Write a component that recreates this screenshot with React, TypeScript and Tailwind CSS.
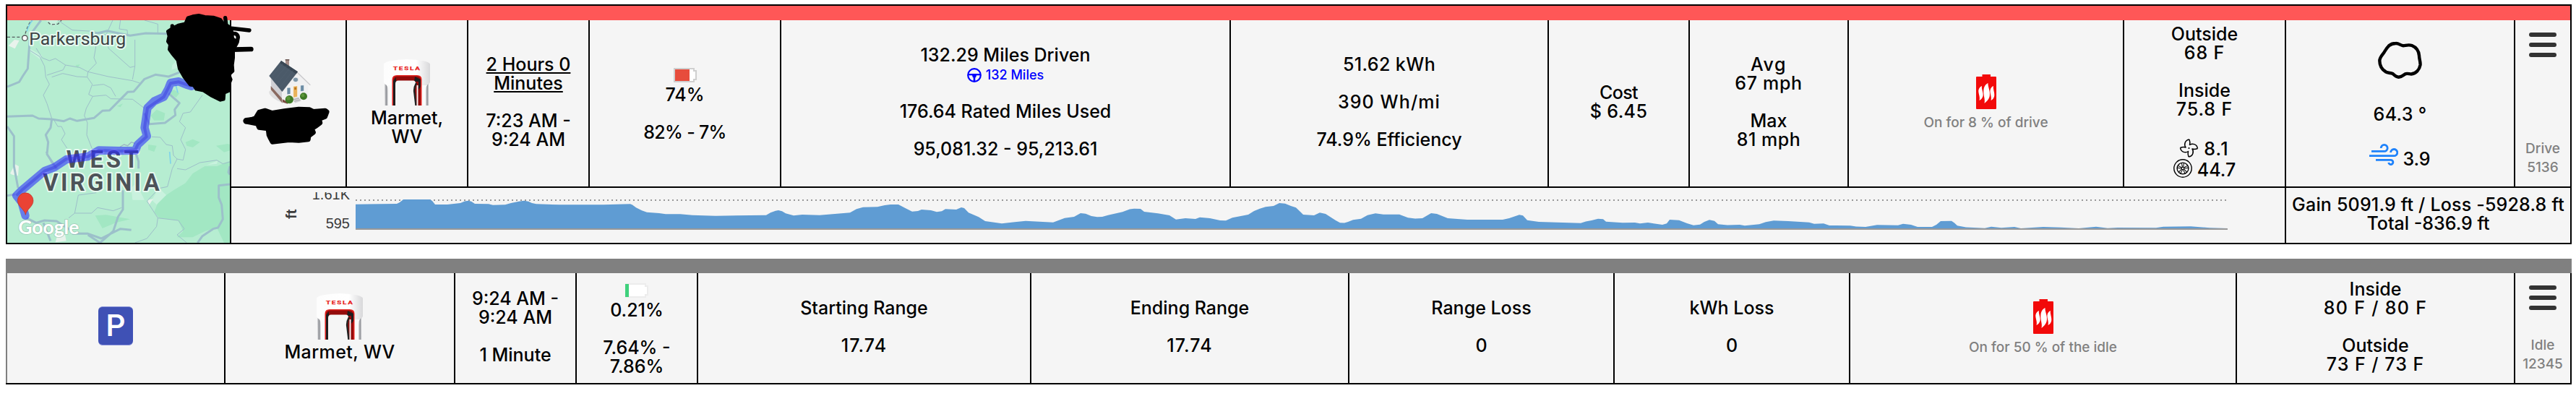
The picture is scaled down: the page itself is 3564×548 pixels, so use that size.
import type { ReactNode } from "react";

// [x, y] samples of the elevation curve
const elevation = [
  [492, 282.7], [549, 282], [553, 280], [558, 276], [595, 276], [598, 278], [602, 283], [619, 283], [637, 281], [643, 278.5], [648, 277.7], [652, 278.8],
  [657, 282], [676, 282.3], [682, 283.7], [699, 283.3], [707, 281], [718, 278.8], [725, 277.7], [731, 278.8], [736, 281], [742, 282.3],
  [774, 283.3], [835, 283.3], [872, 282.3], [875, 283.6], [880, 287.3], [888, 291.2], [895, 293.7], [912, 295], [921, 296.3], [941, 296.3], [958, 297.7],
  [990, 298.7], [1060, 297.7], [1066, 294.3], [1073, 291.7], [1077, 291], [1082, 292.3], [1087, 295.3], [1098, 298.3],
  [1110, 297], [1134, 297.7], [1176, 294.3], [1185, 289.3], [1194, 286.7], [1214, 286.3], [1224, 284], [1232, 283], [1243, 283], [1252, 287.7],
  [1262, 292.7], [1270, 292], [1275, 290], [1288, 291], [1296, 293.3], [1303, 292.3], [1308, 289.3], [1323, 290], [1330, 287],
  [1334, 288], [1340, 294.3], [1354, 300.3], [1363, 306], [1386, 309.3], [1404, 307.3], [1419, 305.7], [1457, 307.7], [1473, 301.7],
  [1486, 300], [1495, 295], [1502, 295.7], [1510, 299], [1518, 300.3], [1525, 300], [1533, 297.7], [1553, 293.3], [1563, 289.4], [1569, 288.7],
  [1578, 289], [1583, 293], [1602, 295.3], [1618, 298], [1627, 303.7], [1640, 302], [1654, 303], [1660, 300.7], [1674, 302], [1688, 305], [1696, 305.3],
  [1705, 301.3], [1727, 297], [1735, 292], [1743, 288.7], [1751, 286.3], [1762, 285], [1770, 281], [1778, 281.7], [1786, 285], [1793, 287.3], [1799, 293], [1803, 297],
  [1818, 298], [1826, 294.3], [1834, 296], [1848, 305], [1854, 308.2], [1860, 308.5], [1865, 307], [1872, 304.3], [1883, 302.7], [1892, 297.7], [1903, 295.3],
  [1914, 296.7], [1936, 296.7], [1948, 301.3], [1958, 302.5], [1968, 302], [1980, 295], [1988, 296], [2003, 302], [2030, 304], [2079, 304],
  [2088, 302], [2102, 297.3], [2107, 298.3], [2113, 304.7], [2129, 307], [2187, 308.7], [2194, 306.5], [2202, 305], [2211, 302.7], [2218, 303.3],
  [2222, 306.7], [2245, 308.3], [2262, 308], [2269, 309.3], [2280, 308], [2300, 311], [2306, 309.3], [2310, 304], [2323, 304.7],
  [2334, 309], [2343, 311.7], [2352, 310.7], [2358, 307], [2365, 304.3], [2372, 305.7], [2377, 310.3], [2390, 311.4], [2407, 311], [2414, 312.3],
  [2434, 310.3], [2443, 307.3], [2454, 305.3], [2474, 306], [2503, 307.7], [2510, 309.7], [2523, 309.3], [2531, 312], [2560, 312.3], [2568, 313.5], [2581, 314], [2597, 311.3],
  [2626, 311.7], [2633, 309.7], [2644, 311], [2653, 314], [2673, 314], [2679, 311], [2685, 306], [2700, 305.7], [2704, 308.5], [2708, 312.3], [2720, 314.4],
  [2746, 315.7], [2755, 313.7], [2769, 315.3], [2787, 314], [2796, 316], [2827, 314], [2851, 314.7], [2876, 316], [2900, 313.7],
  [2916, 315.7], [2930, 315], [2983, 315.3], [2993, 313.7], [3031, 313.3], [3057, 315.3], [3082, 316],
];

function Cell({ className, children }: { className: string; children?: ReactNode }) {
  return (
    <div className={"flex shrink-0 flex-col items-center border-r-2 border-black text-center " + className}>
      {children}
    </div>
  );
}

// Stacked lines of text, an empty string leaves a blank line
function Lines({ items }: { items: string[] }) {
  return (
    <>
      {items.map((item, i) => (
        <p key={i} className="h-[26px] whitespace-nowrap">
          {item}
        </p>
      ))}
    </>
  );
}

function IconCharger() {
  return (
    <svg className="mt-0.5 mb-1 h-16 w-16 shrink-0" viewBox="0 0 64 64">
      <defs>
        <linearGradient id="shell" x1="0" x2="1" y1="0" y2="0">
          <stop offset="0" stopColor="#fdfdfd" />
          <stop offset="0.7" stopColor="#ffffff" />
          <stop offset="1" stopColor="#d8d8da" />
        </linearGradient>
        <linearGradient id="leg" x1="0" x2="1" y1="0" y2="0">
          <stop offset="0" stopColor="#dcdcde" />
          <stop offset="0.5" stopColor="#8f9196" />
          <stop offset="1" stopColor="#e6e6e8" />
        </linearGradient>
      </defs>
      <path d="M0 7 Q0 4.5 8 2.5 Q32 -2.5 56 2.5 Q64 4.5 64 7 V32 Q62 34 60 40 H4 Q2 34 0 32Z" fill="url(#shell)" />
      <path d="M4 36 H12 V64 H6 Q5 50 4 36Z M52 36 H60 V64 H52Z" fill="#fafafa" />
      <path d="M1 34 Q6 36 6 44 V64 H1.5Z" fill="url(#leg)" />
      <path d="M62 34 Q58 36 58 44 V64 H62.5Z" fill="url(#leg)" />
      <path d="M11.5 64 V28 Q11.5 22 18 22 H46 Q52.5 22 52.5 28 V64Z" fill="#e2231f" />
      <path d="M13 64 V29 Q13 23.5 18.5 23.5 H45.5 Q51 23.5 51 29 V64Z" fill="#930b0b" />
      <path d="M13 64 V30 L17 25 V34 L16 64Z M43 24 L51 28 V38 L48 42 L48 31 H42Z" fill="#1d1d1f" />
      <path d="M16 64 V34 Q16 29.5 20 29.5 H41 Q45 30 44 36 L42 46 L44 64Z" fill="#f5f5f5" />
      <path d="M45 33 Q41 40 42.5 47 L44.5 64" fill="none" stroke="#222" strokeWidth="2.4" />
      <path d="M46.5 36 V64" stroke="#f5f5f5" strokeWidth="2" />
      <text
        x="13"
        y="15.2"
        textLength="38.5"
        lengthAdjust="spacingAndGlyphs"
        className="fill-[#e8211d] stroke-[#e8211d] font-['Roboto'] text-[6.8px] font-bold tracking-[1.2px]"
        strokeWidth="0.25"
      >
        TESLA
      </text>
    </svg>
  );
}

function IconHouse() {
  return (
    <svg className="mt-0.5 mb-1 h-16 w-16 shrink-0" viewBox="1101 246 192 192">
      <ellipse cx="1160" cy="402" rx="48" ry="18" fill="#dededf" transform="rotate(28 1160 402)" />
      <path d="M1185 247h15v26h-15z" fill="#a98f8a" />
      <path d="M1184 246h17v5h-17z" fill="#6f5c58" />
      <path d="M1124 318 L1172 376 V420 L1126 368Z" fill="#d0d0d4" />
      <path d="M1124 357 L1172 410 V428 L1124 372Z" fill="#8a6a60" />
      <path d="M1170 378 L1232 298 L1279 346 V406 L1200 430 L1170 424Z" fill="#f0f0f1" />
      <path d="M1172 378 L1233 300 L1288 353" fill="none" stroke="#c9c9cc" strokeWidth="4" />
      <path d="M1167 252 L1236 298 L1171 381 L1117 315Z" fill="#4b5a69" />
      <path d="M1167 252 L1236 298 L1229 307 L1162 262Z" fill="#3a4754" />
      <path d="M1128 318 L1175 264 M1140 331 L1189 274 M1152 346 L1203 283 M1163 361 L1217 292" stroke="#526170" strokeWidth="2" />
      <ellipse cx="1227" cy="331" rx="11" ry="10" fill="#7f97a8" stroke="#fff" strokeWidth="2" />
      <path d="M1191 364 l15 -1 v28 l-15 2z M1247 354 l15 -1 v25 l-15 2z" fill="#6b8ba3" stroke="#fff" strokeWidth="2" />
      <path d="M1217 358 l18 -2 v46 l-18 4z" fill="#e9b25a" stroke="#fff" strokeWidth="2" />
      <path d="M1222 363 l8 -1 v10 l-8 1z" fill="#b9741f" />
      <path d="M1216 408 l22 -5 l12 16 l-26 9z" fill="#d5d5d8" />
      <path d="M1218 414 l24 -6 M1221 421 l26 -7" stroke="#98989c" strokeWidth="2" />
      <path d="M1172 412 v12 l22 7 v-8z" fill="#7a4a40" />
      <circle cx="1201" cy="413" r="17" fill="#3f7a27" />
      <circle cx="1197" cy="408" r="8" fill="#5c9639" />
      <circle cx="1260" cy="400" r="15" fill="#3f7a27" />
      <circle cx="1257" cy="396" r="7" fill="#5c9639" />
    </svg>
  );
}

function IconHeater() {
  return (
    <svg className="mb-1.5 h-12 w-7 shrink-0" viewBox="0 0 28 48">
      <path d="M8.5 0h11.5v3H27a1 1 0 0 1 1 1v43a1 1 0 0 1-1 1H1a1 1 0 0 1-1-1V4a1 1 0 0 1 1-1h7.5z" fill="#f20a0a" />
      <g fill="#fff">
        <path d="M16.5 12C16 17 20.5 24 18.5 31C17.5 35 14 38 11.5 40C13 34 9.5 28 10.5 21C11 16 14 13 16.5 12Z" />
        <path d="M8 16C7 20 10.5 25 9.5 30C8.5 33 7 35 4.5 36C6 31 3 27 3.3 22C4 18.5 6 17 8 16Z" />
        <path d="M24 16C23 20 26 25 25.2 30C24.5 33 23 35 20.5 36C22 31 19 27 19.5 22C20 18.5 22 17 24 16Z" />
      </g>
    </svg>
  );
}

function IconBattery({ charging }: { charging?: boolean }) {
  return (
    <svg className="mt-2 mb-1 h-5 w-8 shrink-0" viewBox="0 0 32 20">
      <path
        d="M1 1H28V4H31V16H28V19H1Z"
        fill="#fff"
        stroke={charging ? "#ececec" : "#cfcfcf"}
        strokeWidth="2"
      />
      {charging ? <path d="M0 1H5V19H0Z" fill="#3fd17c" /> : <path d="M2 2H22V18H2Z" fill="#e74c3c" />}
    </svg>
  );
}

function IconWheel() {
  return (
    <svg className="h-5 w-5" viewBox="0 0 20 20" fill="none" stroke="#00f" strokeWidth="2.2">
      <circle cx="10" cy="10" r="8.8" />
      <path d="M1.5 9.2H18.5" />
      <path d="M10 12V18" strokeWidth="2.6" />
      <path d="M6.5 8.5H13.5L12.3 12.5L10 14.5L7.700 12.5Z" fill="#00f" stroke="none" />
    </svg>
  );
}

function IconFan() {
  const blade = "M13 1Q14.5 5 13.5 8.5C17 6 23.5 7 24.5 13.5";
  return (
    <svg className="h-[26px] w-[25px] overflow-visible" viewBox="0 0 25 26" fill="none" stroke="#000" strokeWidth="1.5" strokeLinejoin="round">
      <path d={blade} />
      <path d={blade} transform="rotate(90 12.5 13)" />
      <path d={blade} transform="rotate(180 12.5 13)" />
      <path d={blade} transform="rotate(270 12.5 13)" />
      <circle cx="12.5" cy="13" r="1.1" fill="#000" stroke="none" />
    </svg>
  );
}

function IconTire() {
  return (
    <svg className="h-[26px] w-[26px]" viewBox="0 0 26 26" fill="none" stroke="#000" strokeWidth="1.4">
      <circle cx="13" cy="13" r="12.2" />
      <circle cx="13" cy="13" r="7.9" />
      <circle cx="13" cy="13" r="1.7" strokeWidth="1" />
      {[0, 72, 144, 216, 288].map((deg) => (
        <path key={deg} d="M11.4 5.3L12.4 11.4M14.6 5.3L13.6 11.4" strokeWidth="1" transform={`rotate(${deg} 13 13)`} />
      ))}
    </svg>
  );
}

function IconWind() {
  return (
    <svg className="h-[30px] w-10" viewBox="0 0 40 30" fill="none" stroke="#1e82fb" strokeWidth="2.8">
      <path d="M3 10.4H20.5A4.5 4.5 0 1 0 16.2 6" />
      <path d="M0 16.7H34A4.6 4.6 0 1 0 29.6 12" />
      <path d="M9 22.4H29.5A3.1 3.1 0 1 1 26.7 26" />
    </svg>
  );
}

function IconCloud() {
  return (
    <svg className="mt-[29px] h-[52px] w-[61px] shrink-0" viewBox="0 0 61 52" fill="none" stroke="#000" strokeWidth="4.4">
      <path d="M24.7 3C29 2.8 31 5.8 35 6.2C38 6.2 42 4.2 47 6C53 8.5 56.5 14 57 20C57 25 59 28 58.5 33C57.5 39 53 45 46 45.5C43 45.5 40 44 37.5 45.5C34 48 33 49.5 28.7 49.7C24 49.5 23 47 20.5 45C17 43.5 15 44.5 11 42.5C5 39 2.3 33 2.3 27C2.5 22 6 19 8.5 15.5C10.5 12 12 9 15.5 6C18 4 21 3 24.7 3Z" />
    </svg>
  );
}

function MenuCell({ lines }: { lines: string[] }) {
  return (
    <div className="flex w-[76px] shrink-0 flex-col items-center justify-between pt-[17px] pb-[13px] text-center text-[19px] text-[#808080]">
      <div className="flex w-[38px] flex-col gap-2">
        <span className="h-1.5 rounded-full bg-[#333]" />
        <span className="h-1.5 rounded-full bg-[#333]" />
        <span className="h-1.5 rounded-full bg-[#333]" />
      </div>
      <div>
        <Lines items={lines} />
      </div>
    </div>
  );
}

function RouteMap() {
  return (
    <svg className="h-[308px] w-[308px]" viewBox="30 84 924 924">
      <path d="M30 84H954V1008H30Z" fill="#b6edd1" />
      <g fill="#a2e7c3">
        <path d="M954 668L900 690L850 690L800 720L770 760L720 790L660 830L640 880L660 905L740 915L760 960L735 985L800 985L850 960L900 945L930 1008H954Z" />
        <path d="M625 480L650 455L685 470L680 500L640 500Z M770 590L800 578L830 590L800 612L775 605Z M897 605L945 597L954 600V625L930 632Z M615 600L650 605L640 630L615 622Z M395 895L440 892L540 910L480 925L425 948Z M313 270L332 268L322 282Z M485 440L510 430L500 445Z M700 385L722 372L745 388L730 405Z" />
      </g>
      <g fill="#c9f2de">
        <path d="M715 270L735 250L735 282L712 290Z M860 685L905 665L900 680Z M545 780L565 760L600 830L550 830Z M120 200L175 230L165 245L125 215Z M630 830L660 780L690 810L650 850Z M190 84L240 84L225 110Z" />
      </g>
      <path d="M35 190L60 165L80 168L62 202Z M42 720L62 682L78 690L75 730L50 725Z M612 830L636 826L618 852Z M240 970L270 975L275 1000L230 1006Z" fill="#e8f3ec" />
      <g fill="none" stroke="#9dbfc9" strokeWidth="3" strokeLinejoin="round">
        <path d="M125 210L165 235L185 275L190 320L205 350L180 395L195 430L215 492" />
        <path d="M150 200L175 240L205 252L230 243L272 270L262 290L195 312M272 270L330 280L365 298L362 320L383 350L368 392L385 400L358 450L350 480L363 510L360 560L385 625" />
        <path d="M240 84L300 125L385 130L398 195L390 240L400 262L365 298L450 318L550 335L580 345" />
        <path d="M385 130L440 145L468 84M440 145L450 200L540 280L560 275L550 330M560 275L560 165M500 84L495 120L528 125L530 150" />
        <path d="M600 84L655 100L655 138M215 320L260 305L320 318L362 320" />
        <path d="M385 400L440 395L460 410L550 412L600 450" />
        <path d="M385 355L430 350L460 365L480 400" />
        <path d="M225 500L240 525L255 525L270 555L255 580L278 615M275 640L320 640" />
        <path d="M630 568L665 570L690 600L715 605L720 645L735 660L715 700L695 775L660 782L610 835L655 905L740 915L765 950L735 975L775 1008" />
        <path d="M735 660L760 665L770 620L750 580L770 530L745 505L760 470L790 465L840 395" />
        <path d="M735 700L770 705L830 675L900 665L925 680L954 672M655 905L650 940L610 990L560 1008" />
        <path d="M190 630L215 680L240 700M325 810L310 885L285 905M325 810L400 800M310 885L380 885L405 862L470 875L505 862" />
      </g>
      <g fill="none" stroke="#9cc0ca" strokeWidth="9" strokeLinejoin="round">
        <path d="M170 84L125 145L115 285L95 315L80 340L30 360" />
        <path d="M30 484L135 480L160 492L215 495L265 503L290 492L320 502L390 490L425 460L455 458L530 382L555 380L600 328L645 310L700 318L750 298" />
        <path d="M215 495L210 530L190 560L200 590L195 640L235 700M30 525L58 565L58 690L75 780" />
        <path d="M395 140L445 128L540 148L605 138L700 140" />
        <path d="M600 470L620 515L685 510L728 478L725 455L745 428L700 388" />
        <path d="M30 812L62 806M110 905L150 925L185 915L235 918L300 960M300 970L365 970L420 990L500 950L545 955M510 790L510 870L490 900L470 960L415 1008L365 975M180 925L210 1000M575 700L575 670L565 640" />
        <path d="M820 1008L840 980L885 950L905 945L925 910L920 850L908 820L908 770L954 765M954 690L948 715L954 725" />
      </g>
      <path d="M30 154H105M105 140Q115 105 130 84M200 92L210 102L240 100L255 84" fill="none" stroke="#555d60" strokeWidth="4" strokeDasharray="12 8" />
      <path d="M112 130Q118 105 135 84M730 355L738 385M704 630L708 680" fill="none" stroke="#7fd3ea" strokeWidth="5" />
      <path d="M498 610L515 600L530 605L545 590L560 595" fill="none" stroke="#9db5c4" strokeWidth="4" />
      <circle cx="103" cy="158" r="11" fill="#fff" stroke="#555" strokeWidth="4" />
      <g className="font-['Roboto'] font-bold" fill="#4d5358" stroke="#e4f8ee" strokeWidth="12" strokeLinejoin="round" paintOrder="stroke">
        <text x="121" y="185" textLength="402" lengthAdjust="spacingAndGlyphs" className="text-[73px] font-normal" fill="#3c4245">
          Parkersburg
        </text>
        <text x="275" y="695" textLength="300" className="text-[98px]">
          WEST
        </text>
        <text x="178" y="793" textLength="484" className="text-[98px]">
          VIRGINIA
        </text>
      </g>
      <path
        d="M795 358L775 352L742 338L708 344L698 370L680 402L640 420L612 448L606 490L600 530L610 565L572 600L562 625L500 626L410 624L365 650L275 662L225 695L185 710L90 790L68 812L90 840L105 895"
        fill="none"
        stroke="#2222ff"
        strokeOpacity="0.55"
        strokeWidth="34"
        strokeLinejoin="round"
        strokeLinecap="round"
      />
      <path
        d="M795 358L742 340L708 346L680 402L612 448L600 530L608 568L572 600L562 622L500 628L410 624L365 650L275 660L225 695L185 710L90 790L68 812"
        fill="none"
        stroke="#3b3be0"
        strokeOpacity="0.5"
        strokeWidth="12"
        strokeLinejoin="round"
      />
      <path d="M106 892C102 868 73 858 73 833A32 32 0 0 1 138 833C138 858 110 868 106 892Z" fill="#ea4335" stroke="#b93529" strokeWidth="2" />
      <text
        x="76"
        y="972"
        textLength="252"
        lengthAdjust="spacingAndGlyphs"
        className="font-['Lato'] text-[78px] font-bold"
        fill="#fff"
        stroke="#8fb8a8"
        strokeOpacity="0.6"
        strokeWidth="5"
        paintOrder="stroke"
      >
        Google
      </text>
    </svg>
  );
}

// Marker strokes that hide the private parts of the drive
function Redaction() {
  return (
    <svg className="pointer-events-none absolute top-0 left-0 h-[220px] w-[480px]" viewBox="0 0 1440 660" stroke="#000" strokeLinecap="round" strokeLinejoin="round">
      <path
        d="M780 74L800 68L825 64L850 70L885 72L915 82L925 95L950 110L962 130L965 160L985 175L968 205L968 240L964 270L966 295L950 310L958 330L950 350L953 375L930 385L928 412L915 415L880 398L845 376L815 370L805 355L790 352L765 320L745 285L738 250L715 222L703 205L706 185L697 172L702 150L697 130L715 118L740 105L770 98Z"
        strokeWidth="14"
      />
      <g fill="none" strokeWidth="16">
        <path d="M935 74L940 115L1035 126" />
        <path d="M950 145Q985 130 988 155Q985 185 960 210" />
        <path d="M965 206L1042 204" strokeWidth="20" />
      </g>
      <path d="M715 108V130" strokeWidth="16" />
      <path
        d="M1025 501L1060 490L1075 465L1100 458L1130 468L1180 460L1240 452L1285 454L1300 462L1350 458L1358 464L1350 485L1325 495L1330 510L1310 525L1295 535L1302 550L1282 565L1280 580L1240 584L1200 582L1130 590L1122 575L1115 560L1112 535L1075 530L1068 515L1030 507Z"
        strokeWidth="18"
      />
      <path d="M1022 502L1080 495" strokeWidth="26" />
    </svg>
  );
}

function ElevationChart() {
  const line = elevation.map(([x, y]) => `L${x} ${y}`).join("");
  return (
    <svg className="h-[76px] w-[2841px]" viewBox="320 260 2841 76">
      <path d="M492 277H3082" stroke="#999" strokeWidth="2" strokeDasharray="2 4" />
      <path d={`M492 317${line}V317Z`} fill="#5f9cd3" />
      <path d="M492 317H3082" stroke="#999" strokeWidth="2" />
      <g className="font-['Liberation_Sans',sans-serif] text-[20px] font-normal" fill="#3c3c3c">
        {/* top label is cut by the plot area */}
        <svg x="420" y="266" width="70" height="20" viewBox="420 266 70 20">
          <text x="484" y="276" textAnchor="end">
            1.61K
          </text>
        </svg>
        <text x="484" y="316" textAnchor="end">
          595
        </text>
        <text transform="translate(410 303) rotate(-90)" className="font-bold">
          ft
        </text>
      </g>
    </svg>
  );
}

function DriveCard() {
  return (
    <div className="w-[3550px] border-2 border-black bg-[#f5f5f5]">
      <div className="h-5 bg-[#ff5757]" />
      <div className="flex h-[308px]">
        <div className="w-[310px] shrink-0 border-r-2 border-black">
          <RouteMap />
        </div>
        <div className="flex flex-col">
          <div className="flex h-[232px] border-b-2 border-black">
            <Cell className="w-[160px] justify-center pb-1">
              <IconHouse />
              <div className="h-[52px]" />
            </Cell>
            <Cell className="w-[168px] justify-center pb-1">
              <IconCharger />
              <Lines items={["Marmet,", "WV"]} />
            </Cell>
            <Cell className="w-[168px] justify-center pb-1">
              <div className="underline decoration-2 underline-offset-[2px] [text-decoration-skip-ink:none]">
                <Lines items={["2 Hours 0", "Minutes"]} />
              </div>
              <Lines items={["", "7:23 AM -", "9:24 AM"]} />
            </Cell>
            <Cell className="w-[265px] justify-center pb-1">
              <IconBattery />
              <Lines items={["74%", ""]} />
              <p className="h-[26px] tracking-[-0.7px]">82% - 7%</p>
            </Cell>
            <Cell className="w-[622px] justify-center pb-1">
              <Lines items={["132.29 Miles Driven"]} />
              <p className="flex h-[26px] items-center gap-1.5 pt-1 text-[18px] text-[#00f]">
                <IconWheel />
                132 Miles
              </p>
              <Lines items={["", "176.64 Rated Miles Used", "", "95,081.32 - 95,213.61"]} />
            </Cell>
            <Cell className="w-[440px] justify-center pb-1">
              <p className="h-[26px] tracking-[0.4px]">51.62 kWh</p>
              <p className="mt-[26px] h-[26px] tracking-[1.1px]">390 Wh/mi</p>
              <Lines items={["", "74.9% Efficiency"]} />
            </Cell>
            <Cell className="w-[195px] justify-center pb-1">
              <p className="h-[26px] tracking-[-0.6px]">Cost</p>
              <p className="h-[26px] tracking-[0.4px]">$ 6.45</p>
            </Cell>
            <Cell className="w-[220px] justify-center pb-1">
              <p className="h-[26px] tracking-[1.6px]">Avg</p>
              <p className="h-[26px] tracking-[0.7px]">67 mph</p>
              <Lines items={["", "Max"]} />
              <p className="h-[26px] tracking-[0.5px]">81 mph</p>
            </Cell>
            <Cell className="w-[381px] justify-center">
              <IconHeater />
              <p className="text-[19px] text-[#808080]">On for 8 % of drive</p>
            </Cell>
            <Cell className="w-[224px] justify-center pb-1.5">
              <Lines items={["Outside"]} />
              <p className="h-[26px] tracking-[0.9px]">68 F</p>
              <Lines items={["", "Inside"]} />
              <p className="mb-[26px] h-[26px] tracking-[0.9px]">75.8 F</p>
              <div className="flex h-7 items-end gap-2">
                <IconFan />
                <span className="leading-[24px] tracking-[1.2px]">8.1</span>
              </div>
              <div className="flex h-7 items-end gap-[7px]">
                <IconTire />
                <span className="leading-[22px]">44.7</span>
              </div>
            </Cell>
            <Cell className="w-[317px]">
              <IconCloud />
              <p className="mt-9 h-[26px] tracking-[0.3px]">64.3 °</p>
              <div className="mt-7 flex h-[30px] items-end gap-1.5">
                <IconWind />
                <span className="leading-[18px]">3.9</span>
              </div>
            </Cell>
            <MenuCell lines={["Drive", "5136"]} />
          </div>
          <div className="flex h-[76px]">
            <ElevationChart />
            <div className="flex w-[395px] flex-col items-center justify-center border-l-2 border-black pb-1">
              <p className="h-[26px] tracking-[0.19px] whitespace-nowrap">Gain 5091.9 ft / Loss -5928.8 ft</p>
              <p className="h-[26px] whitespace-nowrap">Total -836.9 ft</p>
            </div>
          </div>
        </div>
      </div>
    </div>
  );
}

function IdleCard() {
  return (
    <div className="mt-5 w-[3550px]">
      <div className="h-5 bg-[#808080]" />
      <div className="flex h-[152px] border-r-2 border-l-2 border-r-black border-l-[#808080] bg-[#f5f5f5]">
        <Cell className="w-[302px] justify-center pb-1.5">
          <div className="flex h-[54px] w-12 items-center justify-center rounded-md border-y border-[#8b95da] bg-[#3f51b5] font-['Roboto'] text-[42px] leading-none text-white">
            P
          </div>
        </Cell>
        <Cell className="w-[318px] justify-center pb-1">
          <IconCharger />
          <p className="h-[26px] tracking-[0.4px]">Marmet, WV</p>
        </Cell>
        <Cell className="w-[168px] justify-center pb-1">
          <Lines items={["9:24 AM -", "9:24 AM", "", "1 Minute"]} />
        </Cell>
        <Cell className="w-[168px] justify-center pb-1">
          <IconBattery charging />
          <Lines items={["0.21%", "", "7.64% -", "7.86%"]} />
        </Cell>
        <Cell className="w-[461px] justify-center pb-1">
          <Lines items={["Starting Range", ""]} />
          <p className="h-[26px] tracking-[1.1px]">17.74</p>
        </Cell>
        <Cell className="w-[440px] justify-center pb-1">
          <Lines items={["Ending Range", ""]} />
          <p className="h-[26px] tracking-[1.1px]">17.74</p>
        </Cell>
        <Cell className="w-[367px] justify-center pb-1">
          <Lines items={["Range Loss", "", "0"]} />
        </Cell>
        <Cell className="w-[326px] justify-center pb-1">
          <Lines items={["kWh Loss", "", "0"]} />
        </Cell>
        <Cell className="w-[535px] justify-center">
          <IconHeater />
          <p className="text-[19px] text-[#808080]">On for 50 % of the idle</p>
        </Cell>
        <Cell className="w-[385px] justify-center pb-1">
          <Lines items={["Inside"]} />
          <p className="h-[26px] tracking-[1.3px]">80 F / 80 F</p>
          <Lines items={["", "Outside"]} />
          <p className="h-[26px] tracking-[1px]">73 F / 73 F</p>
        </Cell>
        <MenuCell lines={["Idle", "12345"]} />
      </div>
      <div className="h-0.5 bg-black" />
    </div>
  );
}

function App() {
  return (
    <div className="relative h-[548px] w-[3564px] overflow-hidden bg-white pt-1.5 pl-2 font-['Inter',sans-serif] text-[25px] leading-[26px] font-medium text-black">
      <DriveCard />
      <IdleCard />
      <Redaction />
    </div>
  );
}

export default App;
